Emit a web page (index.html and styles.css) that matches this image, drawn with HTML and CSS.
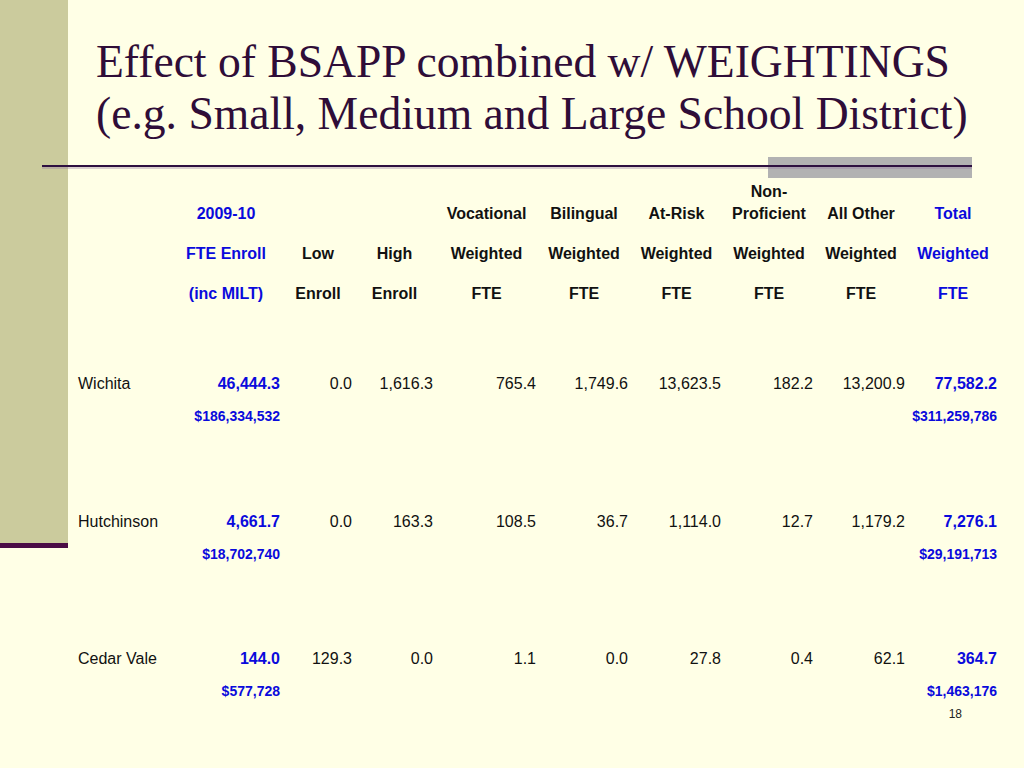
FILE: index.html
```html
<!DOCTYPE html>
<html lang="en">
<head>
<meta charset="utf-8">
<title>Effect of BSAPP combined w/ WEIGHTINGS</title>
<link rel="stylesheet" href="styles.css">
</head>
<body>
<div class="slide">
  <aside class="rail">
    <div class="rail-fill"></div>
    <div class="rail-bar"></div>
  </aside>
  <main class="content">
    <h1 class="title">Effect of BSAPP combined w/ WEIGHTINGS<br>(e.g. Small, Medium and Large School District)</h1>
    <div class="rule">
      <div class="rule-box"></div>
      <div class="rule-line"></div>
    </div>
    <div class="table">
      <div class="row head head-1">
        <div></div>
        <div class="hc blue">2009-10</div>
        <div class="hc"></div>
        <div class="hc"></div>
        <div class="hc">Vocational</div>
        <div class="hc">Bilingual</div>
        <div class="hc">At-Risk</div>
        <div class="hc">Non-<br>Proficient</div>
        <div class="hc">All Other</div>
        <div class="hc blue">Total</div>
      </div>
      <div class="row head head-2">
        <div></div>
        <div class="hc blue">FTE Enroll</div>
        <div class="hc">Low</div>
        <div class="hc">High</div>
        <div class="hc">Weighted</div>
        <div class="hc">Weighted</div>
        <div class="hc">Weighted</div>
        <div class="hc">Weighted</div>
        <div class="hc">Weighted</div>
        <div class="hc blue">Weighted</div>
      </div>
      <div class="row head head-3">
        <div></div>
        <div class="hc blue">(inc MILT)</div>
        <div class="hc">Enroll</div>
        <div class="hc">Enroll</div>
        <div class="hc">FTE</div>
        <div class="hc">FTE</div>
        <div class="hc">FTE</div>
        <div class="hc">FTE</div>
        <div class="hc">FTE</div>
        <div class="hc blue">FTE</div>
      </div>

      <div class="row data first">
        <div class="name">Wichita</div>
        <div class="num key">46,444.3</div>
        <div class="num">0.0</div>
        <div class="num">1,616.3</div>
        <div class="num">765.4</div>
        <div class="num">1,749.6</div>
        <div class="num">13,623.5</div>
        <div class="num">182.2</div>
        <div class="num">13,200.9</div>
        <div class="num key">77,582.2</div>
      </div>
      <div class="row money">
        <div class="cash col-fte">$186,334,532</div>
        <div class="cash col-total">$311,259,786</div>
      </div>

      <div class="row data">
        <div class="name">Hutchinson</div>
        <div class="num key">4,661.7</div>
        <div class="num">0.0</div>
        <div class="num">163.3</div>
        <div class="num">108.5</div>
        <div class="num">36.7</div>
        <div class="num">1,114.0</div>
        <div class="num">12.7</div>
        <div class="num">1,179.2</div>
        <div class="num key">7,276.1</div>
      </div>
      <div class="row money">
        <div class="cash col-fte">$18,702,740</div>
        <div class="cash col-total">$29,191,713</div>
      </div>

      <div class="row data last">
        <div class="name">Cedar Vale</div>
        <div class="num key">144.0</div>
        <div class="num">129.3</div>
        <div class="num">0.0</div>
        <div class="num">1.1</div>
        <div class="num">0.0</div>
        <div class="num">27.8</div>
        <div class="num">0.4</div>
        <div class="num">62.1</div>
        <div class="num key">364.7</div>
      </div>
      <div class="row money">
        <div class="cash col-fte">$577,728</div>
        <div class="cash col-total">$1,463,176</div>
      </div>
    </div>
    <div class="page-num">18</div>
  </main>
</div>
</body>
</html>
```

FILE: styles.css
```css
html, body {
  margin: 0;
  padding: 0;
}

body {
  background: #FFFFE6;
}

.slide {
  width: 1024px;
  height: 768px;
  display: grid;
  grid-template-columns: 68px 1fr;
  background: #FFFFE6;
  overflow: hidden;
}

.rail {
  display: flex;
  flex-direction: column;
}

.rail-fill {
  height: 543px;
  background: #CBCB9D;
}

.rail-bar {
  height: 5px;
  background: #4A0B45;
}

.content {
  display: flex;
  flex-direction: column;
  min-width: 0;
}

.title {
  margin: 36px 0 0 0;
  padding-left: 28px;
  font-family: "Liberation Serif", "Times New Roman", serif;
  font-weight: normal;
  font-size: 45.6px;
  line-height: 52px;
  color: #2F0D38;
  white-space: nowrap;
}

.rule {
  margin-top: 17px;
  margin-left: -26px;
  width: 930px;
  height: 24px;
  display: grid;
  grid-template-columns: 1fr 204px;
  grid-template-rows: 24px;
}

.rule-box {
  grid-column: 2;
  grid-row: 1;
  height: 21px;
  background: #B2B2B2;
}

.rule-line {
  grid-column: 1 / 3;
  grid-row: 1;
  align-self: start;
  margin-top: 8px;
  height: 2px;
  background: #2E1040;
  box-shadow: 0 2px 0 0 rgba(150, 120, 160, 0.35);
}

.table {
  margin-left: 10px;
  font-family: "Liberation Sans", Arial, sans-serif;
  font-size: 16px;
  color: #111111;
}

.row {
  display: grid;
  grid-template-columns: 94px 108px 72px 81px 103px 92px 93px 92px 92px 92px;
}

.head {
  font-weight: bold;
  line-height: 22px;
  align-items: end;
}

.head-1 {
  min-height: 44px;
}

.head-2,
.head-3 {
  margin-top: 18px;
}

.hc {
  text-align: center;
  padding-left: 4px;
}

.head .hc:nth-child(2) {
  padding-left: 0;
}

.blue {
  color: #0A0ADC;
}

.data {
  line-height: 22px;
  margin-top: 85px;
}

.data.first {
  margin-top: 68px;
}

.data.last {
  margin-top: 84px;
}

.name {
  text-align: left;
}

.num {
  text-align: right;
}

.num.key {
  color: #0A0ADC;
  font-weight: bold;
}

.money {
  margin-top: 11px;
  font-size: 14px;
  line-height: 20px;
  font-weight: bold;
  color: #0A0ADC;
}

.cash {
  text-align: right;
}

.col-fte {
  grid-column: 2;
}

.col-total {
  grid-column: 10;
}

.page-num {
  margin-top: 6px;
  padding-right: 62px;
  text-align: right;
  font-family: "Liberation Sans", Arial, sans-serif;
  font-size: 12px;
  line-height: 14px;
  color: #222222;
}
```
